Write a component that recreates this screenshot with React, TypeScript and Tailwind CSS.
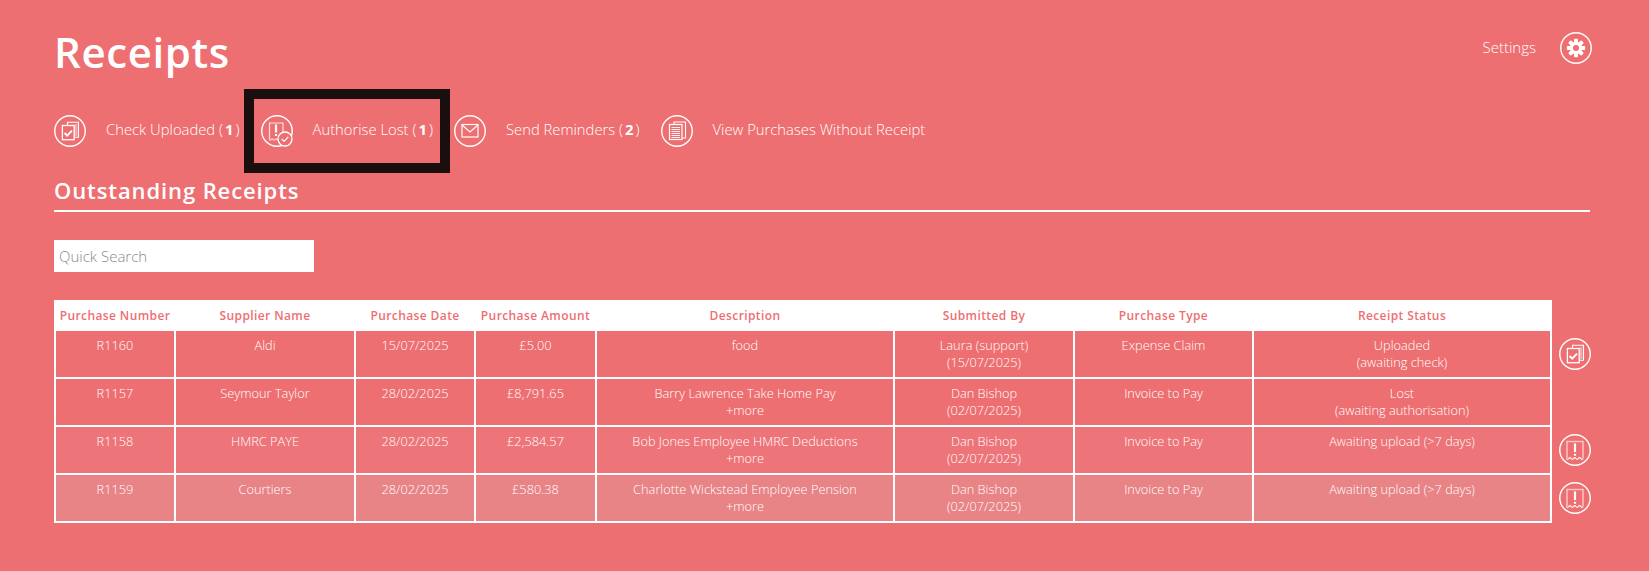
import React from "react";

const Ring = ({ children, className = "" }: { children: React.ReactNode; className?: string }) => (
  <svg viewBox="0 0 32 32" className={`w-8 h-8 shrink-0 overflow-visible ${className}`} fill="none" stroke="white">
    <circle cx="16" cy="16" r="15.25" strokeWidth="1.4" />
    {children}
  </svg>
);

const CheckDocs = () => (
  <Ring>
    <path d="M13.5 10V7.2h11v15h-4" strokeWidth="1.1" />
    <path d="M20.5 10h3M20.5 12h3M20.5 14h3M20.5 16h3M20.5 18h3M20.5 20h3" strokeWidth="0.8" />
    <rect x="8.4" y="10.5" width="11.8" height="14.2" strokeWidth="1.3" />
    <path d="M10.6 18l2.6 2.6 4.8-5" strokeWidth="1.9" />
  </Ring>
);

const ReceiptIcon = () => (
  <Ring>
    <path d="M8 24V7.5h16V24" strokeWidth="1.5" strokeOpacity="0.6" />
    <path d="M7.4 24.5q1.2 1.7 2.4 0t2.4 0t2.4 0t2.4 0t2.4 0t2.4 0t2.4 0" strokeWidth="1.1" />
    <path d="M16 9.5v8.5M16 19.8v2" strokeWidth="2.2" />
  </Ring>
);

const AuthoriseIcon = () => (
  <Ring>
    <path d="M8.5 24V8h13.5v11" strokeWidth="1.2" strokeOpacity="0.8" />
    <path d="M8 24.5q1 1.6 2 0t2 0t2 0t2 0t2 0" strokeWidth="1" />
    <path d="M15 9.5v8M15 19v2" strokeWidth="2.2" />
    <circle cx="24" cy="24" r="7" fill="#ed6f72" strokeWidth="1.3" />
    <path d="M20.8 24l2.3 2.3 4.2-4.4" strokeWidth="1.2" />
  </Ring>
);

const MailIcon = () => (
  <Ring>
    <rect x="8" y="9.5" width="16" height="12.5" strokeWidth="1.2" />
    <path d="M8 10l8 7 8-7" strokeWidth="1.2" />
  </Ring>
);

const PagesIcon = () => (
  <Ring>
    <path d="M13 9V7h11.5v16H21" strokeWidth="1.1" />
    <rect x="8.5" y="9.5" width="12.5" height="15" strokeWidth="1.2" />
    <path d="M10.5 12.5h8.5M10.5 14.5h8.5M10.5 16.5h8.5M10.5 18.5h8.5M10.5 20.5h8.5M10.5 22.5h8.5" strokeWidth="0.9" />
  </Ring>
);

const teeth = [0, 45, 90, 135, 180, 225, 270, 315];

const GearIcon = () => (
  <Ring>
    {teeth.map((a) => (
      <rect key={a} x="14" y="6.8" width="4" height="5" rx="0.8" fill="white" stroke="none" transform={`rotate(${a} 16 16)`} />
    ))}
    <circle cx="16" cy="16" r="6.2" fill="white" stroke="none" />
    <circle cx="16" cy="16" r="3" fill="#ed6f72" stroke="none" />
  </Ring>
);

const NavItem = ({ icon, label, count, active }: { icon: React.ReactNode; label: string; count?: number; active?: boolean }) => (
  <div className="relative flex items-center gap-[20px]">
    {icon}
    <span className="text-[14.8px] leading-5 font-light text-white -mt-[4px]">
      {label}
      {count !== undefined && (
        <>
          {" "}(<b className="font-bold mx-[2px]">{count}</b>)
        </>
      )}
    </span>
    {active && <div className="absolute -left-[17px] -right-[17px] -top-[26px] -bottom-[26px] border-[10px] border-[#1a0e0f]" />}
  </div>
);

const columns = [120, 180, 120, 121, 298, 180, 179, 298, 40];
const headers = ["Purchase Number", "Supplier Name", "Purchase Date", "Purchase Amount", "Description", "Submitted By", "Purchase Type", "Receipt Status"];

type Row = { cells: React.ReactNode[]; icon?: React.ReactNode; bg: string };

const rows: Row[] = [
  {
    cells: ["R1160", "Aldi", "15/07/2025", "£5.00", "food", <>Laura (support)<br />(15/07/2025)</>, "Expense Claim", <>Uploaded<br />(awaiting check)</>],
    icon: <CheckDocs />,
    bg: "bg-[#ed6f72]",
  },
  {
    cells: ["R1157", "Seymour Taylor", "28/02/2025", "£8,791.65", <>Barry Lawrence Take Home Pay<br />+more</>, <>Dan Bishop<br />(02/07/2025)</>, "Invoice to Pay", <>Lost<br />(awaiting authorisation)</>],
    bg: "bg-[#ed6f72]",
  },
  {
    cells: ["R1158", "HMRC PAYE", "28/02/2025", "£2,584.57", <>Bob Jones Employee HMRC Deductions<br />+more</>, <>Dan Bishop<br />(02/07/2025)</>, "Invoice to Pay", "Awaiting upload (>7 days)"],
    icon: <ReceiptIcon />,
    bg: "bg-[#ed7478]",
  },
  {
    cells: ["R1159", "Courtiers", "28/02/2025", "£580.38", <>Charlotte Wickstead Employee Pension<br />+more</>, <>Dan Bishop<br />(02/07/2025)</>, "Invoice to Pay", "Awaiting upload (>7 days)"],
    icon: <ReceiptIcon />,
    bg: "bg-[#e88386]",
  },
];

export default function App() {
  return (
    <div className="min-h-[571px] bg-[#ed6f72] pl-[54px] pr-[59px] pt-[27px] text-white font-['Open_Sans',sans-serif]">
      <div className="flex items-start justify-between">
        <h1 className="text-[42px] leading-[50px] font-semibold tracking-[0.6px]">Receipts</h1>
        <div className="flex items-center gap-[24px] mt-[5px] -mr-[2px]">
          <span className="text-[15px] font-light leading-5 -mt-[3px]">Settings</span>
          <GearIcon />
        </div>
      </div>

      <nav className="flex items-center gap-[21px] mt-[38px]">
        <NavItem icon={<CheckDocs />} label="Check Uploaded" count={1} />
        <NavItem icon={<AuthoriseIcon />} label="Authorise Lost" count={1} active />
        <NavItem icon={<MailIcon />} label="Send Reminders" count={2} />
        <NavItem icon={<PagesIcon />} label="View Purchases Without Receipt" />
      </nav>

      <h2 className="mt-[29px] pb-[6px] border-b-2 border-white text-[22px] leading-7 font-semibold tracking-[0.9px]">Outstanding Receipts</h2>

      <input
        className="block mt-[28px] w-[260px] h-[32px] bg-white px-[5px] text-[15px] font-light text-gray-700 placeholder:text-[#8a8a8a] outline-none"
        placeholder="Quick Search"
      />

      <table className="mt-[28px] w-full table-fixed border-collapse text-[12.8px] leading-[17px] font-light">
        <colgroup>
          {columns.map((w, i) => (
            <col key={i} style={{ width: w }} />
          ))}
        </colgroup>
        <thead>
          <tr className="h-[29px]">
            {headers.map((h) => (
              <th key={h} className="bg-white border-2 border-white text-[12px] text-[#ed6f72] font-semibold text-center align-middle p-0 tracking-[0.4px]">
                {h}
              </th>
            ))}
            <th className="p-0" />
          </tr>
        </thead>
        <tbody>
          {rows.map((r, i) => (
            <tr key={i} className="h-[48px]">
              {r.cells.map((c, j) => (
                <td key={j} className={`${r.bg} border-2 border-white text-center align-top pt-[6px] p-0`}>
                  {c}
                </td>
              ))}
              <td className="p-0 align-middle">
                <div className="flex justify-end">{r.icon}</div>
              </td>
            </tr>
          ))}
        </tbody>
      </table>
    </div>
  );
}
